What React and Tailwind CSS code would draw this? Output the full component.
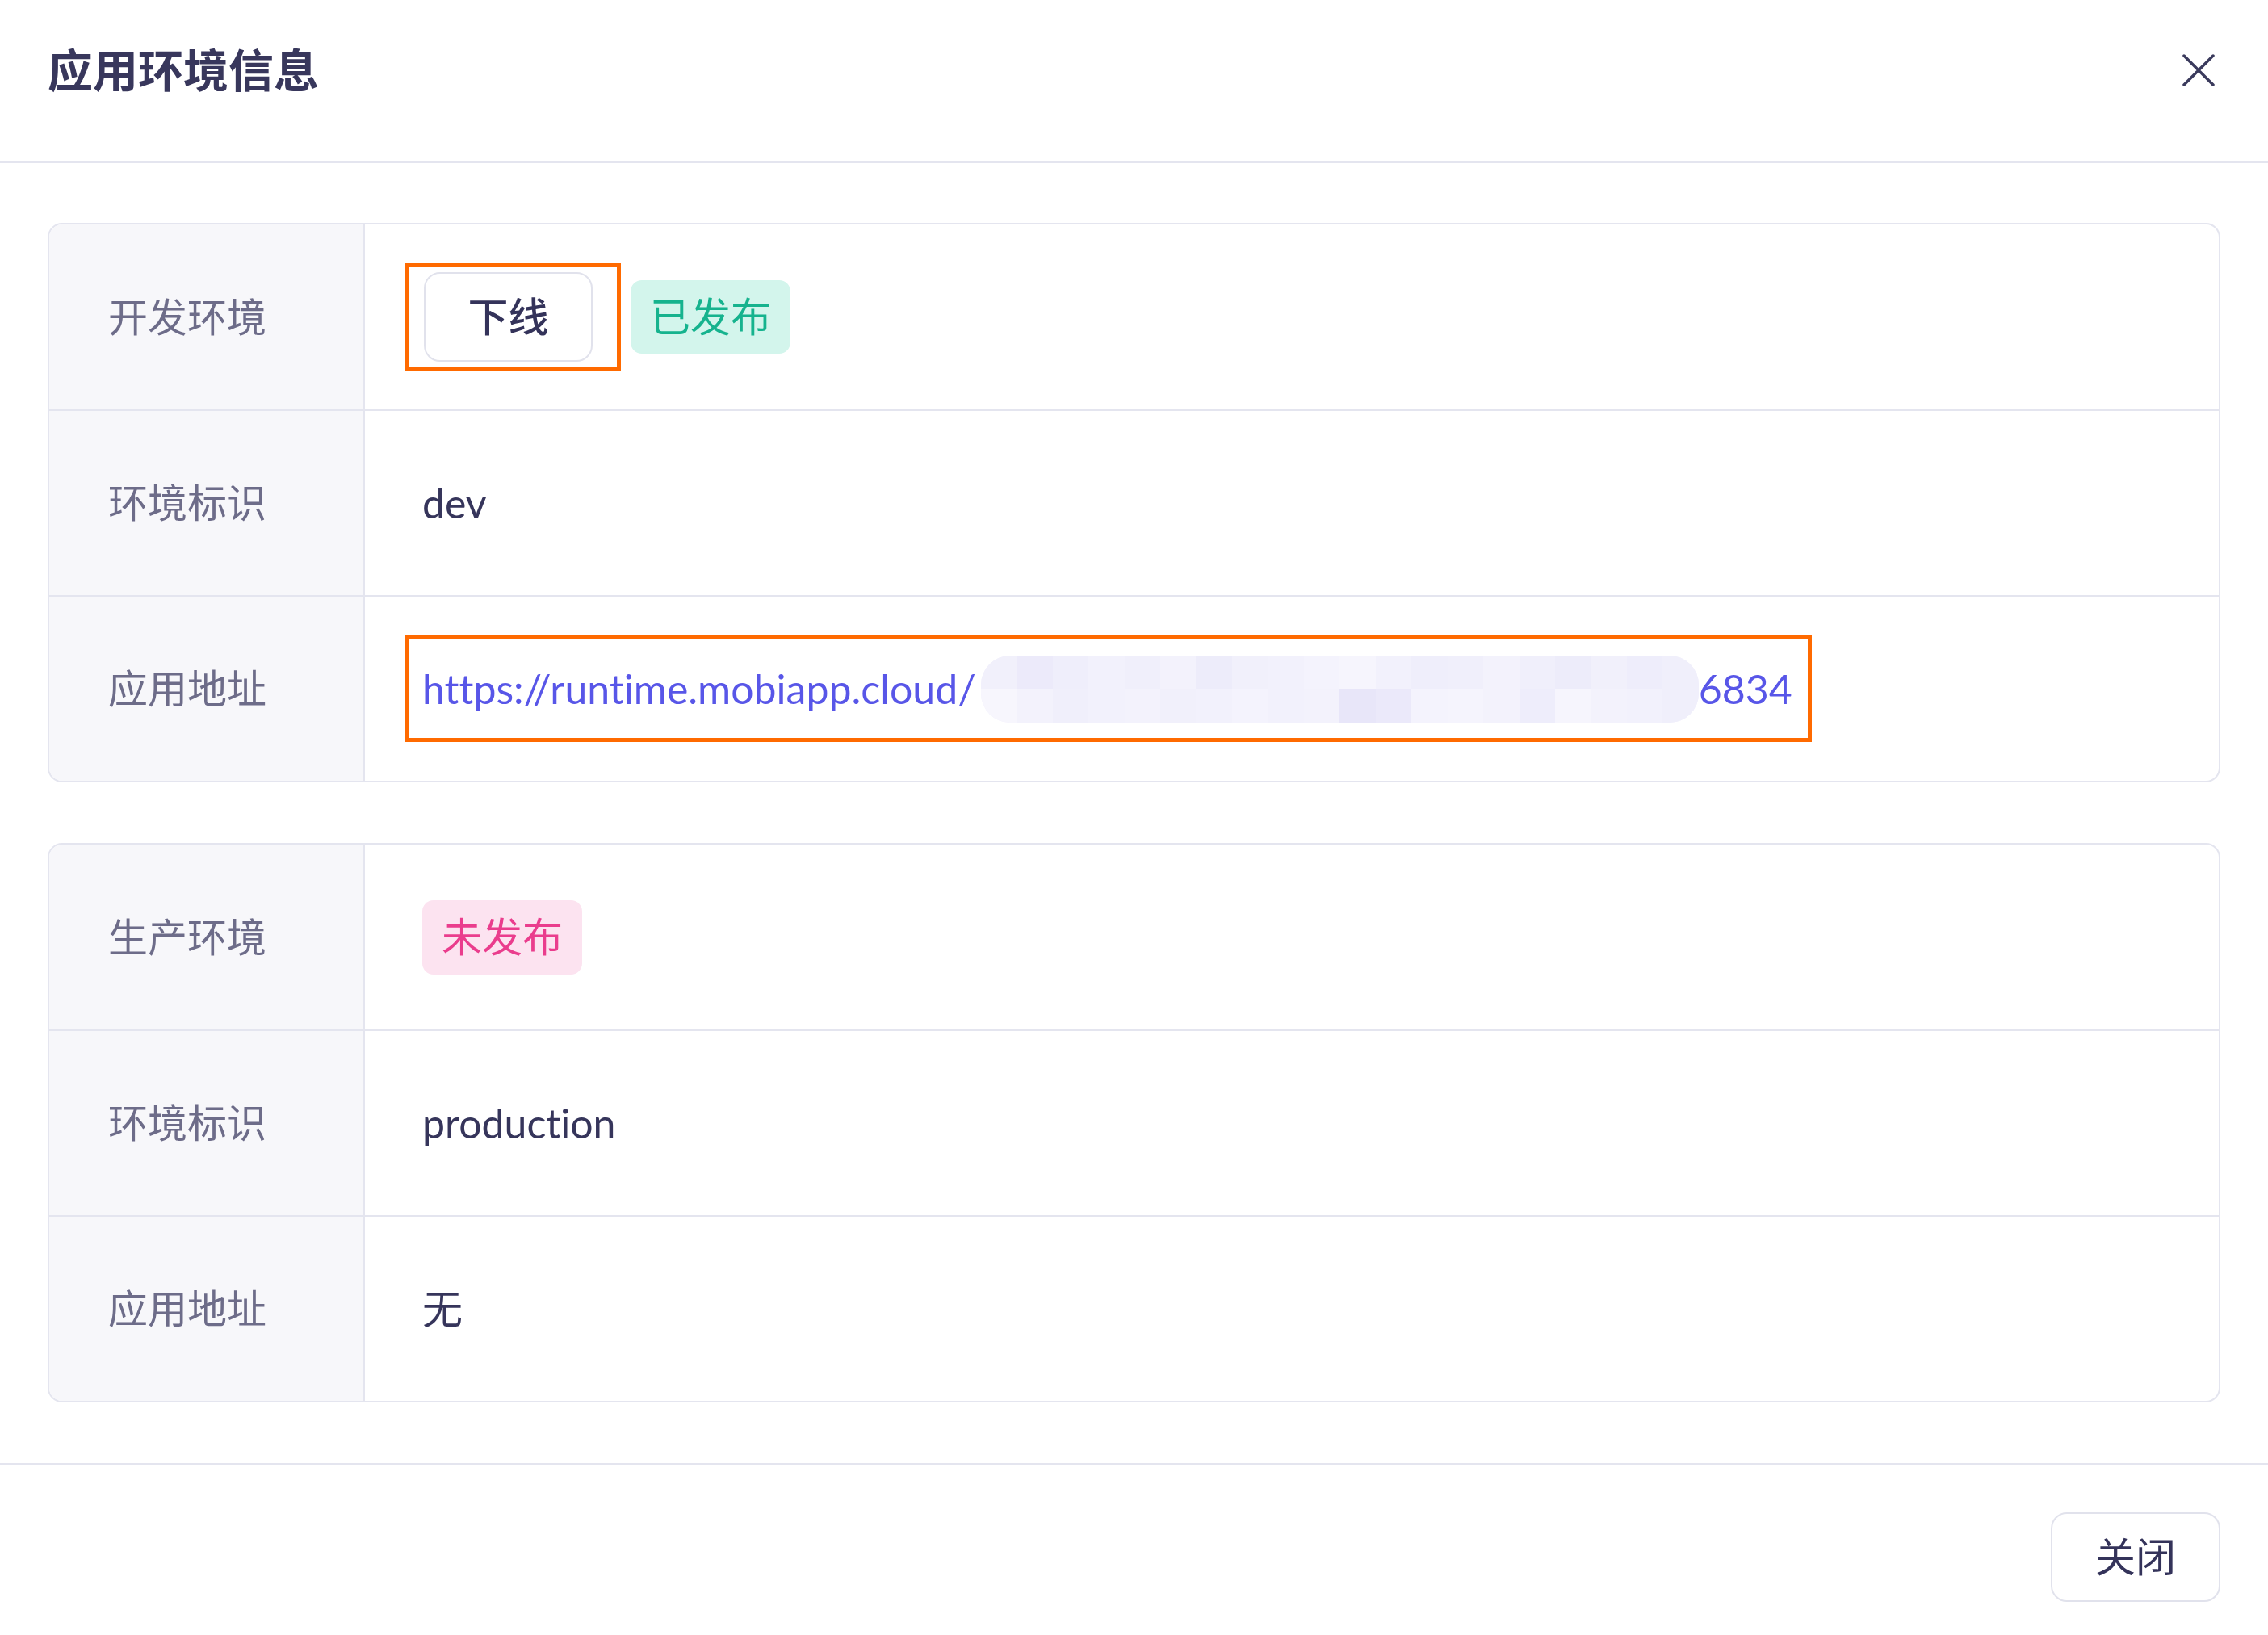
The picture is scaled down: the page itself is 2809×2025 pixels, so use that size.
import React from 'react';

const mosaicTop = [
  'bg-[#f1f0fb]', 'bg-[#eceafa]', 'bg-[#efeefb]', 'bg-[#f2f1fc]', 'bg-[#f0effb]',
  'bg-[#f3f2fc]', 'bg-[#edecfa]', 'bg-[#f1f0fb]', 'bg-[#f2f1fc]', 'bg-[#f4f3fd]',
  'bg-[#f6f5fd]', 'bg-[#f2f1fc]', 'bg-[#efeefb]', 'bg-[#f0effb]', 'bg-[#f3f2fc]',
  'bg-[#f0effb]', 'bg-[#edecfa]', 'bg-[#f1f0fb]', 'bg-[#eeedfb]', 'bg-[#f0effb]',
];

const mosaicBottom = [
  'bg-[#f7f6fd]', 'bg-[#f3f2fc]', 'bg-[#f0effb]', 'bg-[#f2f1fc]', 'bg-[#f3f2fc]',
  'bg-[#f1f0fb]', 'bg-[#f2f1fc]', 'bg-[#f4f3fd]', 'bg-[#f2f1fc]', 'bg-[#f3f2fc]',
  'bg-[#e8e6f9]', 'bg-[#ebe9fa]', 'bg-[#f4f3fd]', 'bg-[#f5f4fd]', 'bg-[#f3f2fc]',
  'bg-[#eeedfb]', 'bg-[#f6f5fd]', 'bg-[#f3f2fc]', 'bg-[#f2f1fc]', 'bg-[#f0effb]',
];

const Row = ({ label, first, children, boxed }) => (
  <div className={first ? 'flex h-[229px]' : 'flex h-[230px] border-t-2 border-[#e4e5ef]'}>
    <div className="w-[391px] shrink-0 bg-[#f7f7fa] border-r-2 border-[#e4e5ef] flex items-center pl-[73px] text-[49px] text-[#6d6c89]">
      {label}
    </div>
    <div className={boxed ? 'flex-1 flex items-center pl-[50px]' : 'flex-1 flex items-center pl-[71px]'}>
      {children}
    </div>
  </div>
);

const Card = ({ children }) => (
  <div className="border-2 border-[#e4e5ef] rounded-[18px] overflow-hidden bg-white">{children}</div>
);

// blurred part of the url
const Mosaic = () => (
  <span className="inline-flex flex-col w-[889px] h-[83px] rounded-[36px] overflow-hidden ml-[6px] bg-[#f1f0fb]">
    <span className="flex flex-1">
      {mosaicTop.map((c, i) => (
        <span key={i} className={`flex-1 ${c}`} />
      ))}
    </span>
    <span className="flex flex-1">
      {mosaicBottom.map((c, i) => (
        <span key={i} className={`flex-1 ${c}`} />
      ))}
    </span>
  </span>
);

export default function App() {
  return (
    <div className="w-[2809px] h-[2025px] bg-white font-['Lato','Noto_Sans_CJK_SC',sans-serif] [font-variant-ligatures:none] text-[#36355b]">
      {/* header */}
      <div className="h-[202px] border-b-2 border-[#e4e5ef] pl-[59px] pr-[66px] pt-[57px]">
        <div className="flex justify-between items-center h-[60px]">
          <h1 className="text-[56px] leading-[60px] font-bold text-[#38375c]">应用环境信息</h1>
          <svg width="40" height="40" viewBox="0 0 40 40" fill="none">
            <path d="M2 2L38 38M38 2L2 38" stroke="#3a3a5c" strokeWidth="3.5" strokeLinecap="round" />
          </svg>
        </div>
      </div>

      {/* body */}
      <div className="px-[59px] pt-[74px] pb-[75px] flex flex-col gap-[75px]">
        <Card>
          <Row label="开发环境" first boxed>
            <div className="border-[5px] border-[#ff6a00] pl-[18px] pr-[30px] py-[6px]">
              <button className="w-[209px] h-[111px] border-2 border-[#e1e2ec] rounded-[20px] bg-white text-[50px] font-medium text-[#34335a]">
                下线
              </button>
            </div>
            <span className="ml-[12px] h-[91px] px-[24px] rounded-[14px] bg-[#d3f5ec] text-[#16b38e] text-[50px] flex items-center">
              已发布
            </span>
          </Row>
          <Row label="环境标识">
            <span className="text-[50px]">dev</span>
          </Row>
          <Row label="应用地址" boxed>
            <div className="border-[5px] border-[#ff6a00] h-[132px] pl-[16px] pr-[19px] flex items-center text-[50px] text-[#5856e8]">
              <span>https://runtime.mobiapp.cloud/</span>
              <Mosaic />
              <span>6834</span>
            </div>
          </Row>
        </Card>

        <Card>
          <Row label="生产环境" first>
            <span className="h-[92px] px-[24px] rounded-[14px] bg-[#fce3f0] text-[#ea3d8d] text-[50px] flex items-center">
              未发布
            </span>
          </Row>
          <Row label="环境标识">
            <span className="text-[50px]">production</span>
          </Row>
          <Row label="应用地址">
            <span className="text-[50px]">无</span>
          </Row>
        </Card>
      </div>

      {/* footer */}
      <div className="border-t-2 border-[#e4e5ef] pt-[59px] pr-[59px] flex justify-end">
        <button className="w-[210px] h-[111px] border-2 border-[#e1e2ec] rounded-[20px] bg-white text-[50px] text-[#34335a]">
          关闭
        </button>
      </div>
    </div>
  );
}
